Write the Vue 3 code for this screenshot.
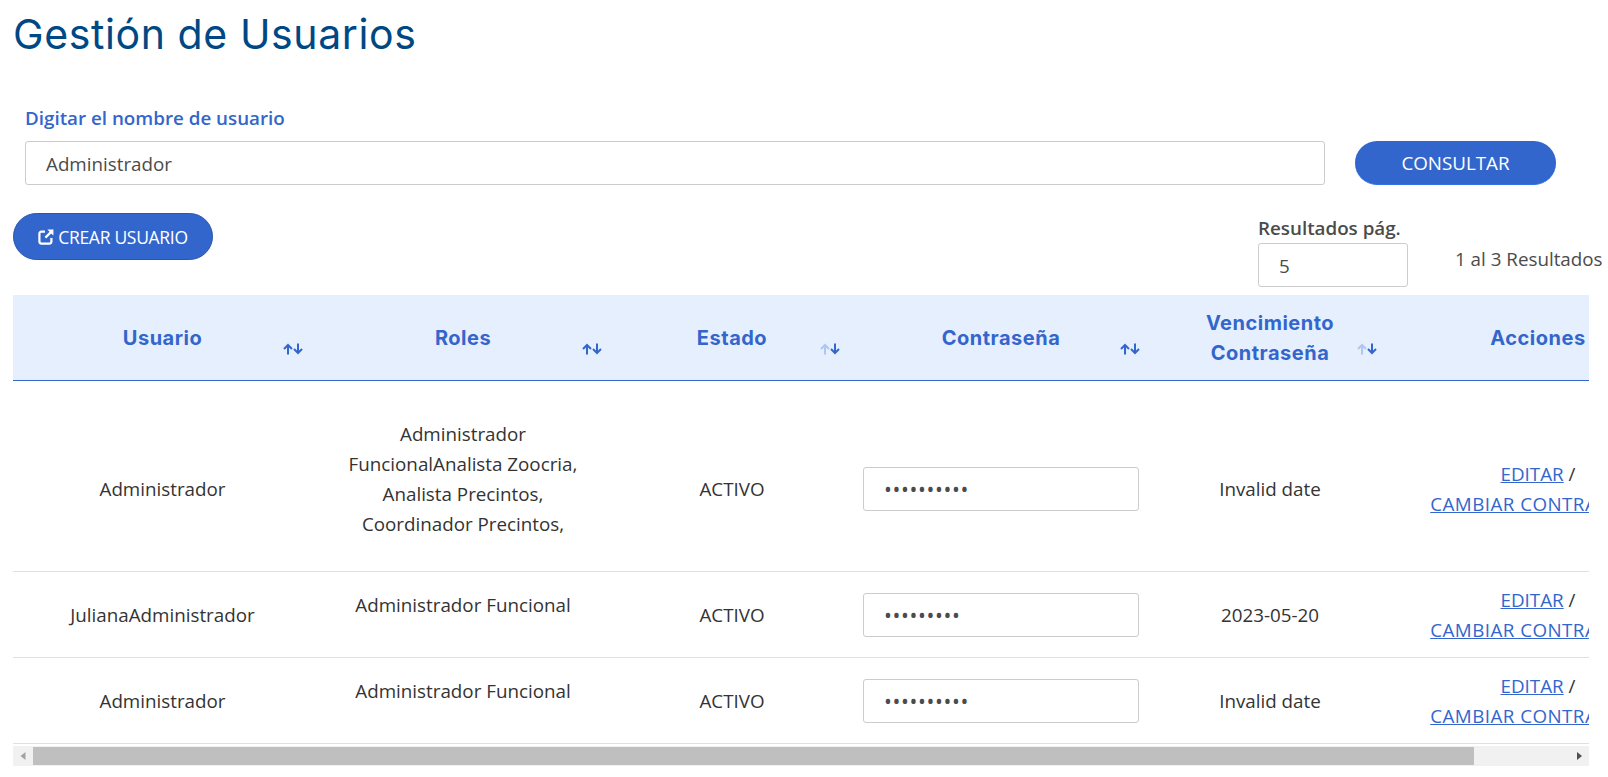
<template>
  <div class="page">
    <h1 class="page-title">Gestión de Usuarios</h1>

    <div class="search-block">
      <label class="search-label">Digitar el nombre de usuario</label>
      <div class="search-row">
        <input class="field search-input" type="text" value="Administrador" />
        <button class="btn-consultar">CONSULTAR</button>
      </div>
    </div>

    <div class="toolbar">
      <button class="btn-crear">
        <svg class="ext-icon" viewBox="0 0 16 16" width="16" height="16">
          <path d="M7 2.6H3.4A2 2 0 0 0 1.4 4.6v8a2 2 0 0 0 2 2h8a2 2 0 0 0 2-2V9" fill="none" stroke="#fff" stroke-width="2.2" />
          <path d="M9.4 .6h6v6l-2.2-2.2-5 5-1.6-1.6 5-5z" fill="#fff" />
        </svg>
        CREAR USUARIO
      </button>
      <div class="page-size">
        <label class="page-size-label">Resultados pág.</label>
        <input class="field page-size-input" type="text" value="5" />
      </div>
      <span class="page-info">1 al 3 Resultados</span>
    </div>

    <div class="table-wrap">
      <table class="users">
        <colgroup>
          <col v-for="w in colWidths" :key="w.name" :style="{ width: w.width + 'px' }" />
        </colgroup>
        <thead>
          <tr>
            <th v-for="h in headers" :key="h.label">
              <span v-html="h.label"></span>
              <svg v-if="h.sort" class="sort" :style="{ right: h.right + 'px' }" viewBox="0 0 20 12" width="20" height="12">
                <path d="M5 11.5V2M1 6l4-4 4 4" fill="none" stroke="#3366cc" stroke-width="2" :opacity="h.sort === 'down' ? 0.3 : 1" />
                <path d="M15 .5V10M11 6l4 4 4-4" fill="none" stroke="#3366cc" stroke-width="2" />
              </svg>
            </th>
          </tr>
        </thead>
        <tbody>
          <tr class="spacer"><td colspan="6"></td></tr>
          <tr v-for="(u, i) in users" :key="i">
            <td>{{ u.name }}</td>
            <td><p class="roles">{{ u.roles }}</p></td>
            <td>ACTIVO</td>
            <td><input class="field pass-input" type="password" :value="u.pass" readonly /></td>
            <td>{{ u.due }}</td>
            <td class="actions">
              <a href="#">EDITAR</a> /<br />
              <a href="#" class="link-long">CAMBIAR CONTRASEÑA</a>
            </td>
          </tr>
        </tbody>
      </table>
    </div>

    <div class="scrollbar">
      <svg viewBox="0 0 20 20" width="20" height="20"><path d="M12.5 6v8L7.5 10z" fill="#a3a3a3" /></svg>
      <div class="scroll-track"><div class="scroll-thumb"></div></div>
      <svg viewBox="0 0 20 20" width="20" height="20"><path d="M8 6v8l5-4z" fill="#505050" /></svg>
    </div>
  </div>
</template>

<script setup>
const colWidths = [
  { name: "usuario", width: 299 },
  { name: "roles", width: 302 },
  { name: "estado", width: 236 },
  { name: "pass", width: 302 },
  { name: "venc", width: 236 },
  { name: "acciones", width: 300 },
];

const headers = [
  { label: "Usuario", sort: "both", right: 9 },
  { label: "Roles", sort: "both", right: 12 },
  { label: "Estado", sort: "down", right: 10 },
  { label: "Contraseña", sort: "both", right: 12 },
  { label: "Vencimiento<br>Contraseña", sort: "down", right: 11 },
  { label: "Acciones", sort: "", right: 0 },
];

const users = [
  {
    name: "Administrador",
    roles: "Administrador FuncionalAnalista Zoocria, Analista Precintos, Coordinador Precintos,",
    pass: "0123456789",
    due: "Invalid date",
  },
  {
    name: "JulianaAdministrador",
    roles: "Administrador Funcional",
    pass: "012345678",
    due: "2023-05-20",
  },
  {
    name: "Administrador",
    roles: "Administrador Funcional",
    pass: "0123456789",
    due: "Invalid date",
  },
];
</script>

<style>
html,
body {
  margin: 0;
  background: #fff;
  overflow: hidden;
}
</style>

<style scoped>
.page {
  width: 1608px;
  height: 777px;
  box-sizing: border-box;
  padding: 10px 19px 0 13px;
  font-family: "Open Sans", "Noto Sans", sans-serif;
  font-size: 18.8px;
  color: #333;
}

.page-title {
  margin: 0;
  font-family: Inter, sans-serif;
  font-size: 41px;
  font-weight: 400;
  line-height: 48px;
  letter-spacing: 0.6px;
  color: #004884;
}

.search-block {
  margin-top: 45px;
  padding-left: 12px;
}

.search-label {
  display: block;
  line-height: 30px;
  font-weight: 600;
  color: #3366cc;
}

.search-row {
  display: flex;
  gap: 30px;
  margin-top: 8px;
  align-items: center;
}

.field {
  box-sizing: border-box;
  height: 44px;
  padding: 1px 20px 0;
  border: 1px solid #ccc;
  border-radius: 3px;
  background: #fff;
  font-family: inherit;
  font-size: 18.8px;
  color: #4b4b4b;
  outline: none;
}

.search-input {
  width: 1300px;
}

.btn-consultar {
  width: 201px;
  height: 44px;
  border: none;
  border-bottom: 1px solid #2f74e6;
  border-radius: 23px;
  background: #3366cc;
  color: #fff;
  font-family: inherit;
  font-size: 18.8px;
}

.toolbar {
  display: flex;
  align-items: flex-start;
  margin-top: 28px;
}

.btn-crear {
  display: flex;
  flex: none;
  align-items: center;
  justify-content: center;
  gap: 4px;
  width: 200px;
  height: 47px;
  border: 1px solid #2a55aa;
  border-radius: 24px;
  background: #3366cc;
  color: #fff;
  font-family: inherit;
  font-size: 17.5px;
  letter-spacing: -0.3px;
}

.page-size {
  flex: none;
  margin-left: 1045px;
}

.page-size-label {
  display: block;
  line-height: 30px;
  font-weight: 600;
  color: #4b4b4b;
}

.page-size-input {
  display: block;
  width: 150px;
}

.page-info {
  flex: none;
  margin-left: 47px;
  margin-top: 31px;
  line-height: 30px;
  white-space: nowrap;
  color: #4b4b4b;
}

.table-wrap {
  width: 1576px;
  margin-top: 8px;
  overflow: hidden;
}

.users {
  width: 1675px;
  table-layout: fixed;
  border-collapse: collapse;
}

.users th {
  position: relative;
  padding: 12.5px 12px;
  background: #e6effd;
  border-bottom: 1px solid #3366cc;
  font-family: Inter, sans-serif;
  font-size: 20px;
  font-weight: 700;
  line-height: 30px;
  letter-spacing: 0.5px;
  text-align: center;
  color: #3366cc;
}

.sort {
  position: absolute;
  top: 48px;
}

.users td {
  padding: 12.5px 12px;
  border-bottom: 1px solid #e0e0e0;
  line-height: 30px;
  text-align: center;
  vertical-align: middle;
  color: #333;
}

.users .spacer td {
  height: 25px;
  padding: 0;
  border: none;
}

.roles {
  margin: 0 0 20px;
  padding: 0 18px;
}

.pass-input {
  width: 276px;
  vertical-align: middle;
  font-size: 21px;
  letter-spacing: 0.6px;
}

.actions {
  white-space: nowrap;
}

.actions a {
  color: #3366cc;
  text-decoration: underline;
}

.actions .link-long {
  letter-spacing: 0.45px;
}

.scrollbar {
  display: flex;
  align-items: center;
  width: 1576px;
  height: 20px;
  margin-top: 2px;
  background: #f1f1f1;
}

.scroll-track {
  flex: 1;
  height: 100%;
}

.scroll-thumb {
  width: 1441px;
  height: 18px;
  margin-top: 1px;
  background: #bfbfbf;
}
</style>
